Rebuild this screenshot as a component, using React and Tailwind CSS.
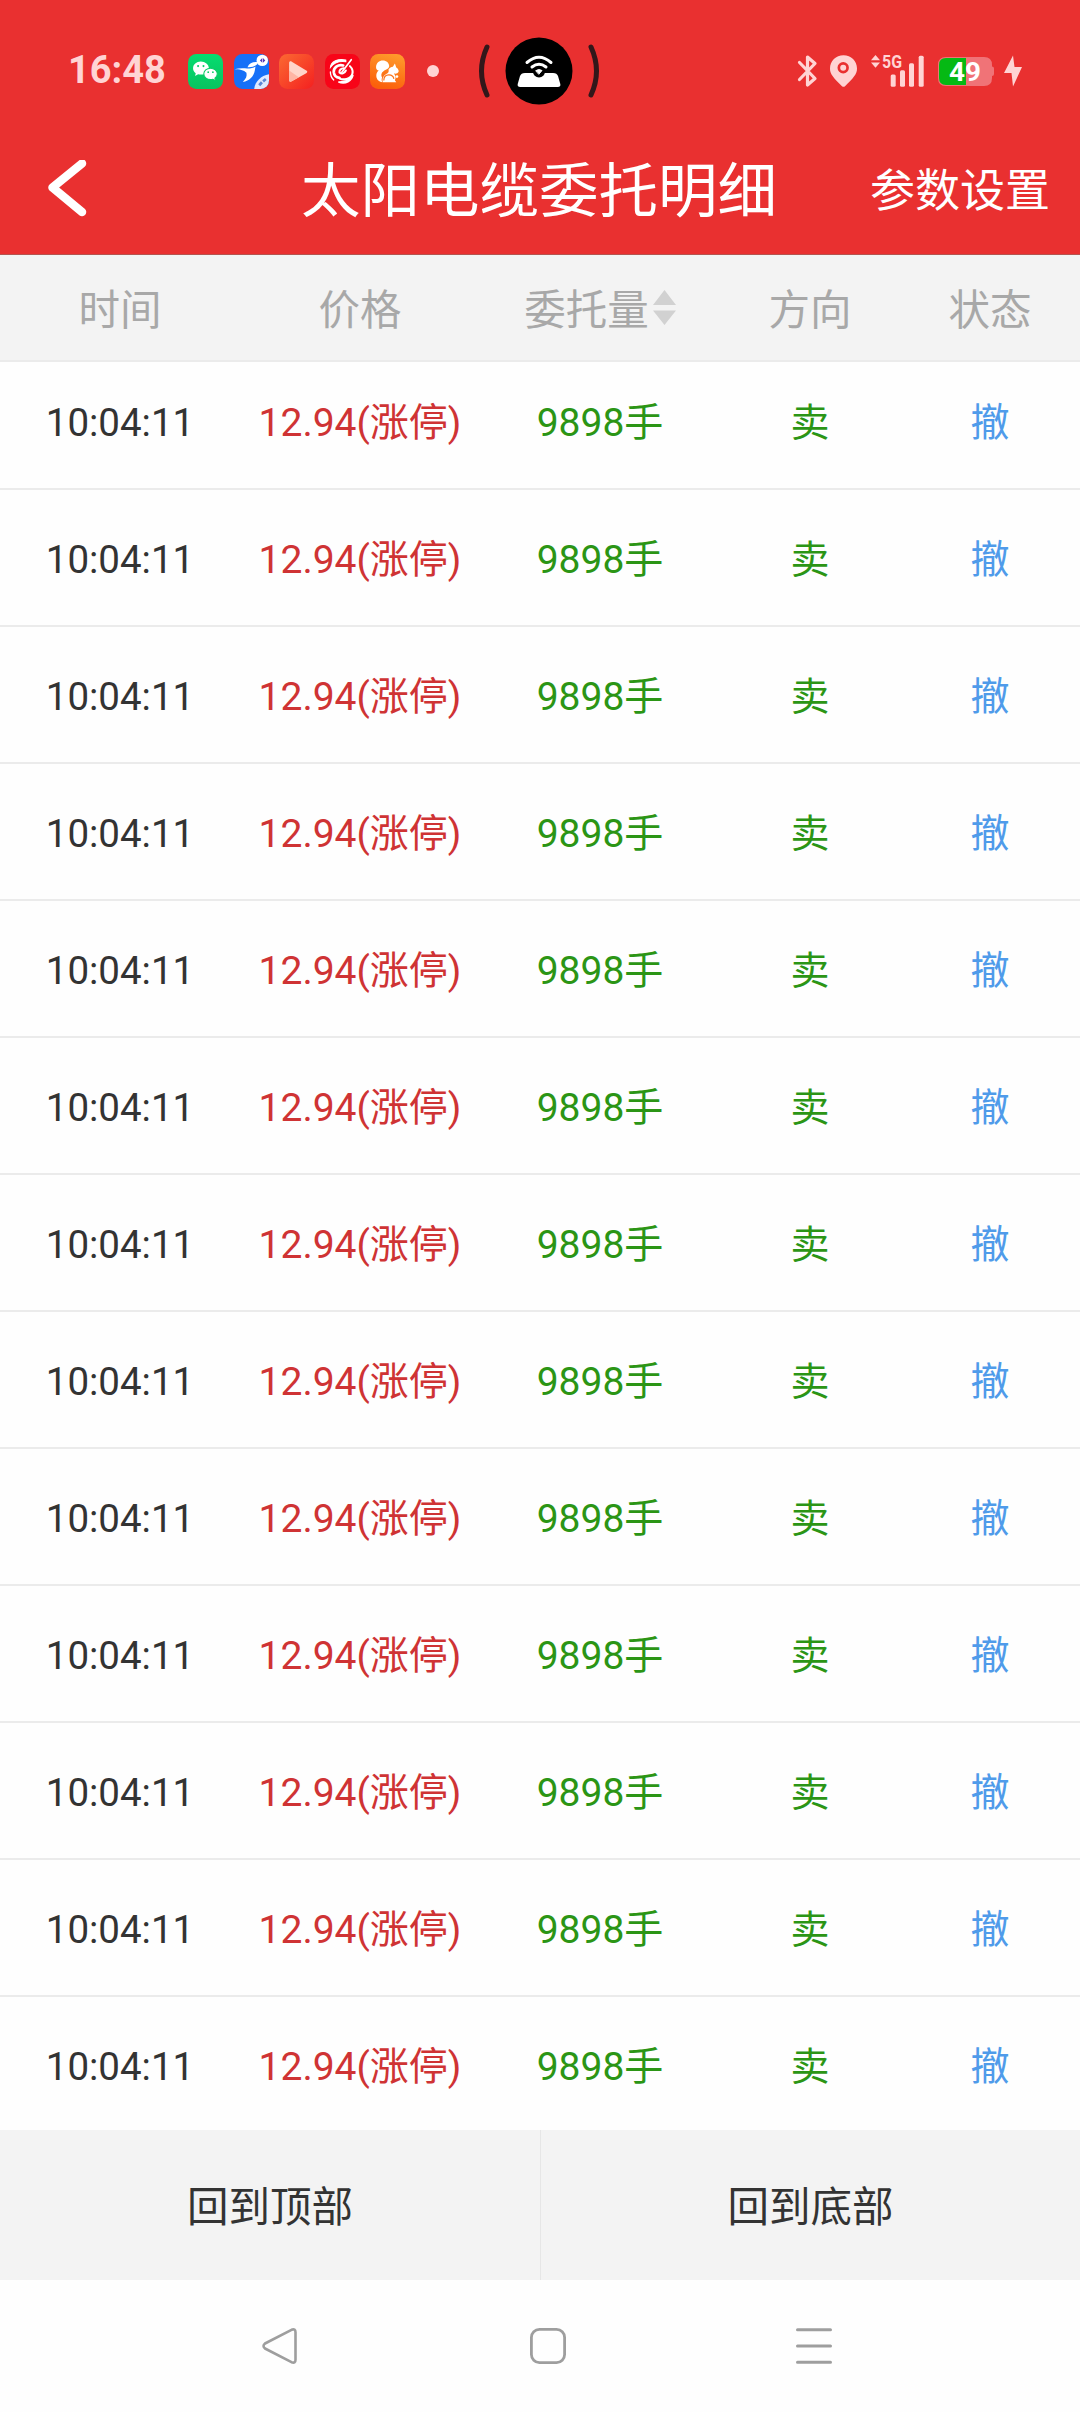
import React from 'react';

const orders = Array.from({ length: 13 }, (_, i) => ({
    id: i,
    time: '10:04:11',
    price: '12.94(涨停)',
    amount: '9898手',
    side: '卖',
    status: '撤',
}));

const WechatIcon = () => (
    <svg width="35" height="35" viewBox="0 0 104 104">
        <defs>
            <linearGradient id="wechat" x1="0" y1="0" x2="0" y2="1">
                <stop offset="0" stopColor="#06dc70" />
                <stop offset="1" stopColor="#08c35f" />
            </linearGradient>
        </defs>
        <rect width="104" height="104" rx="25" fill="url(#wechat)" />
        <path d="M38 22c-13 0-23 9-23 20 0 6 3 11 8 15l-2 8 9-5c3 1 6 1 9 1 12 0 23-8 23-19S51 22 38 22z" fill="#fff" />
        <path d="M67 42c-12 0-20 8-20 17s8 17 20 17c3 0 5 0 7-1l8 4-2-7c4-3 7-8 7-13 0-9-9-17-20-17z" fill="#fff" stroke="#08cb65" strokeWidth="3" />
        <circle cx="30" cy="36" r="3" fill="#08cb65" />
        <circle cx="46" cy="36" r="3" fill="#08cb65" />
        <circle cx="60" cy="54" r="2.6" fill="#08cb65" />
        <circle cx="74" cy="54" r="2.6" fill="#08cb65" />
    </svg>
);

const BirdIcon = () => (
    <svg width="35" height="35" viewBox="0 0 104 104">
        <clipPath id="birdClip">
            <rect width="104" height="104" rx="25" />
        </clipPath>
        <g clipPath="url(#birdClip)">
            <rect width="104" height="104" fill="#1670f8" />
            <path d="M104 60v44H60c2-22 20-40 44-44z" fill="#dfeaff" />
            <path d="M72 90l8-9 6 6-8 9zM84 78l8-7 5 6-8 8z" fill="#5c86d8" />
        </g>
        <path d="M1 45c12-3 26-3 38-2 11 0 19-2 25-6-1 4-1 7-2 11-3 19-16 31-36 35 10-9 13-17 11-27C30 47 15 45 1 45z" fill="#fff" />
        <path d="M40 39c5-11 14-15 28-15l2 6c-8 7-17 10-30 9z" fill="#fff" />
        <circle cx="84" cy="19" r="17" fill="#fff" />
        <path d="M77 19l7-7v14zM86 12l7 7-7 7z" fill="#5637b6" />
    </svg>
);

const PlayIcon = () => (
    <svg width="35" height="35" viewBox="0 0 104 104">
        <defs>
            <linearGradient id="play" x1="0" y1="0" x2="1" y2="1">
                <stop offset="0" stopColor="#fb6a32" />
                <stop offset="1" stopColor="#f42020" />
            </linearGradient>
        </defs>
        <rect width="104" height="104" rx="25" fill="url(#play)" />
        <path d="M30 27c0-5 4-7 8-4l43 26c4 2 4 6 0 8L38 81c-4 3-8 1-8-4z" fill="#ffd5c9" />
        <path d="M30 49l29 20-21 12c-4 3-8 1-8-4z" fill="#ffb4a3" />
    </svg>
);

const SwirlIcon = () => (
    <svg width="35" height="35" viewBox="0 0 104 104" fill="none" stroke="#fff" strokeLinecap="round">
        <rect width="104" height="104" rx="25" fill="#f80418" stroke="none" />
        <path d="M62 18C40 12 17 22 16 40c10-14 26-20 46-17z" fill="#fff" strokeWidth="3" />
        <path d="M54 34C38 30 25 41 26 54c1 9 7 16 17 17" strokeWidth="8" />
        <path d="M16 53c0 11 3 18 10 24" strokeWidth="4" />
        <path d="M74 36c14 14 9 33-10 38-7 2-14 2-20-1" strokeWidth="6" />
        <path d="M83 62c-3 18-22 29-43 21 16 1 32-5 43-21z" fill="#fff" strokeWidth="5" />
        <path d="M78 17L50 54" strokeWidth="5" />
        <path d="M56 42c-9 0-14 6-13 13 6 6 15 3 19-6" strokeWidth="6" />
    </svg>
);

const SquirrelIcon = () => (
    <svg width="35" height="35" viewBox="0 0 104 104">
        <defs>
            <linearGradient id="squirrel" x1="0.8" y1="0" x2="0.5" y2="1">
                <stop offset="0" stopColor="#ff9c2c" />
                <stop offset="1" stopColor="#fb600c" />
            </linearGradient>
        </defs>
        <rect width="104" height="104" rx="25" fill="url(#squirrel)" />
        <path d="M18 39c0-12 9-20 20-20s19 7 19 17c0 9-10 10-17 15-7 4-8 13-4 19-2 5-2 10 1 14-11-1-20-10-18-23 1-6 3-9 7-12-5-1-8-5-8-10z" fill="#fff" />
        <path d="M55 46c4-5 8-7 13-8l6-10 4 12c5 3 8 8 7 13-2 5-8 6-14 5 6 7 6 14 3 20l4 6H38c-3-14 4-22 14-27 4-3 4-6 3-11z" fill="#fff" />
        <path d="M41 79c0-11 6-17 15-17 8 0 14 5 15 12" fill="none" stroke="#fd7418" strokeWidth="3.5" />
        <circle cx="80" cy="67" r="4" fill="#fff" />
    </svg>
);

const HotspotIsland = () => (
    <svg width="122" height="68" viewBox="0 0 122 68" fill="none" strokeLinecap="round">
        <path d="M9 10Q-2 34 9 58M113 10q11 24 0 48" stroke="#32171a" strokeWidth="5" />
        <circle cx="61" cy="34" r="33.5" fill="#000" />
        <path d="M47 36h28c3 0 4 1 5 3l2 7c1 3 0 4-3 4H43c-3 0-4-1-3-4l2-7c1-2 2-3 5-3z" fill="#fff" />
        <circle cx="61" cy="34.5" r="6" fill="#000" />
        <path d="M49 25.500q12-10.500 24 0M54 30q7-5.500 14 0" stroke="#fff" strokeWidth="3" />
        <path d="M58 33.500q3-2 6 0l-3 3.500z" fill="#fff" stroke="#fff" strokeWidth="1" strokeLinejoin="round" />
    </svg>
);

const SystemIcons = () => (
    <svg width="228" height="50" viewBox="0 -8 228 50" fill="#ffd4d4">
        {/* bluetooth */}
        <path d="M3.500 8.500L19 24.500l-7.500 6.500V3l7.500 6.500L3.500 25.500" fill="none" stroke="#ffd4d4" strokeWidth="3.200" strokeLinejoin="round" strokeLinecap="round" />
        {/* location */}
        <path fillRule="evenodd" d="M47.500 1.200c-7.600 0-13.500 5.800-13.500 13.200 0 6 3.500 9 12 17.800q1.500 1.300 3 0C57.500 23.400 61 20.400 61 14.400 61 7 55.100 1.200 47.500 1.200zm-.3 6.800a5.700 5.700 0 1 1 0 11.400 5.700 5.700 0 0 1 0-11.400z" />
        <circle cx="47.200" cy="13.700" r="3" />
        {/* mobile data */}
        <path d="M79.500 1l4.500 5.200h-9zM79.500 13.700l4.500-5.200h-9z" />
        <rect x="94.700" y="20.500" width="5" height="12.200" rx="1.500" />
        <rect x="104" y="16.300" width="5" height="16.400" rx="1.500" />
        <rect x="113" y="9.300" width="5" height="23.400" rx="1.500" />
        <rect x="122.700" y="1.700" width="5" height="31" rx="1.500" />
        <text x="86" y="13.500" fontFamily="Roboto, sans-serif" fontSize="17.500" fontWeight="700" textLength="20" lengthAdjust="spacingAndGlyphs">5G</text>
        {/* battery */}
        <path d="M150 3h38q8 0 8 8v1.500q2 0 2 2V20q0 2-2 2v2q0 8-8 8h-38q-8 0-8-8V11q0-8 8-8z" fill="#f07377" />
        <path d="M170 4v27h-20q-7 0-7-7V11q0-7 7-7z" fill="#05b914" />
        <text x="153" y="26.500" fill="#fff" fontFamily="Roboto, sans-serif" fontSize="26" fontWeight="700" textLength="32" lengthAdjust="spacingAndGlyphs">49</text>
        <path d="M217 1.500L208 19h7.500l1.500 13.500L226 13h-7.500z" />
    </svg>
);

const StatusBar = () => (
    <div className="flex h-[142px] items-center pl-[68px]">
        <span className="w-[120px] pb-0.5 font-[Roboto] text-[38px] leading-none font-bold text-[#ffd4d4]">16:48</span>
        <div className="flex w-[290px] items-center gap-[10.600px]">
            <WechatIcon />
            <BirdIcon />
            <PlayIcon />
            <SwirlIcon />
            <SquirrelIcon />
            <span className="ml-[11px] size-3 rounded-full bg-[#ffd4d4]" />
        </div>
        <HotspotIsland />
        <div className="ml-[196px]">
            <SystemIcons />
        </div>
    </div>
);

const TitleBar = () => (
    <div className="grid h-[112px] grid-cols-[270px_540px_270px] items-center pb-4 text-white">
        <svg className="ml-[46px]" width="42" height="60" viewBox="0 0 42 60" fill="none" stroke="currentColor" strokeWidth="8.500" strokeLinecap="round" strokeLinejoin="round">
            <path d="M36 3.500L6.500 27.500l29.500 24.500" />
        </svg>
        <h1 className="pt-1.5 pr-0.5 text-center text-[59.500px] leading-none">太阳电缆委托明细</h1>
        <button className="pt-0.5 pr-[30px] text-right text-[45px] leading-none">参数设置</button>
    </div>
);

const columns = 'grid grid-cols-[240px_240px_240px_180px_180px] items-center text-center';

const TableHead = () => (
    <div className={`${columns} h-[107px] shrink-0 border-b-2 border-[#ebebeb] bg-[#f3f3f3] text-[41.500px] leading-none text-[#a8a8a8]`}>
        <span className="pt-1.5">时间</span>
        <span className="pt-1.5">价格</span>
        <span className="flex items-center justify-center gap-1">
            <span className="pt-1.5">委托量</span>
            <svg width="23" height="36" viewBox="0 0 23 36" fill="#d1d1d1">
                <path d="M11.500 0L23 15H0zM11.500 35L23 20.500H0z" />
            </svg>
        </span>
        <span className="pt-1.5">方向</span>
        <span className="pt-1.5">状态</span>
    </div>
);

const OrderRow = ({ order }) => (
    <div className={`${columns} h-[137px] shrink-0 border-b-2 border-[#ebebeb] pt-1.5 text-[39px] leading-none`}>
        <span className="text-[38.500px] text-[#333]">{order.time}</span>
        <span className="text-[#cf3334]">{order.price}</span>
        <span className="text-[#2b9515]">{order.amount}</span>
        <span className="text-[#2b9515]">{order.side}</span>
        <span className="text-[#4f9bea]">{order.status}</span>
    </div>
);

const BottomActions = () => (
    <div className="grid h-[150px] grid-cols-2 bg-[#f3f3f3] text-[41.500px] leading-none text-[#333]">
        <button className="pt-1.5">回到顶部</button>
        <button className="border-l border-[#e6e6e6] pt-1.5">回到底部</button>
    </div>
);

const NavBar = () => (
    <div className="flex h-[132px] items-center justify-between bg-[#fefefe] pr-[247px] pl-[261px] text-[#9e9e9e]">
        <svg width="38" height="38" viewBox="0 0 38 38" fill="none" stroke="currentColor" strokeWidth="2.600" strokeLinejoin="round">
            <path d="M30.500 2.800L4 16.500q-3 2.500 0 5L30.500 35.200q4 1.500 4-2.500V5.300q0-4-4-2.500z" />
        </svg>
        <svg className="ml-0.5" width="38" height="38" viewBox="0 0 38 38" fill="none" stroke="currentColor" strokeWidth="2.800">
            <rect x="2.400" y="2.400" width="33.200" height="33.200" rx="8" />
        </svg>
        <svg width="38" height="38" viewBox="0 0 38 38" stroke="currentColor" strokeWidth="3" strokeLinecap="round">
            <path d="M2.500 2.700h33M2.500 19h33M2.500 35.300h33" />
        </svg>
    </div>
);

const App = () => {
    return (
        <div className="flex h-[2412px] w-[1080px] flex-col overflow-hidden bg-[#fefefe] font-[Roboto,'Noto_Sans_CJK_SC',sans-serif]">
            <header className="h-[255px] shrink-0 border-b border-[#b5544f] bg-[#e93030]">
                <StatusBar />
                <TitleBar />
            </header>
            <TableHead />
            {/* list is scrolled a little, so the first row is cut at the top */}
            <main className="flex h-[1768px] shrink-0 flex-col justify-end overflow-hidden">
                <div className="-mb-[4px] flex flex-col">
                    {orders.map(order => (
                        <OrderRow key={order.id} order={order} />
                    ))}
                </div>
            </main>
            <BottomActions />
            <NavBar />
        </div>
    );
};

export default App;
